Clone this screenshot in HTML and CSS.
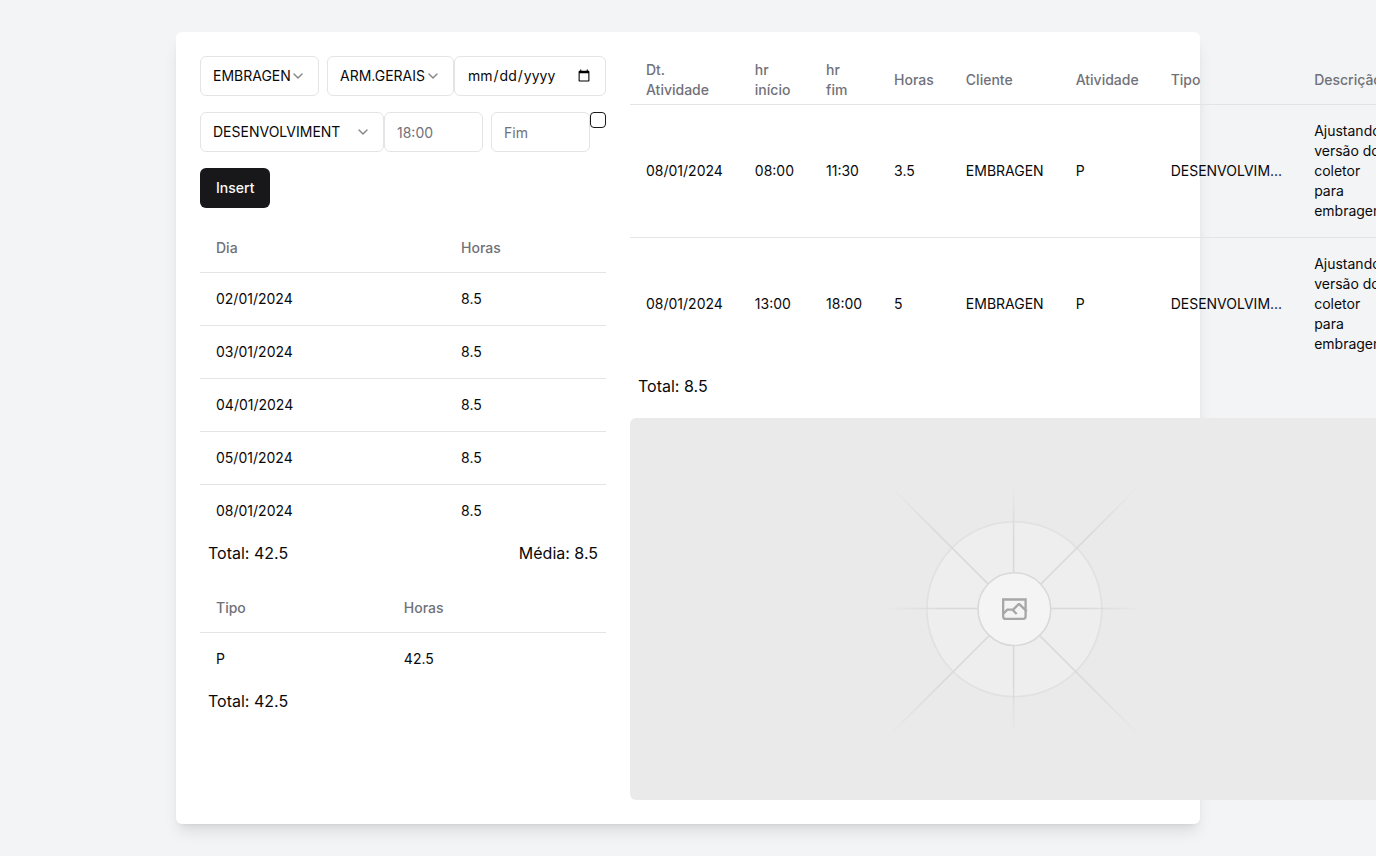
FILE: index.html
```html
<!DOCTYPE html>
<html lang="pt-BR">
<head>
<meta charset="utf-8">
<meta name="viewport" content="width=device-width, initial-scale=1">
<title>Atividades</title>
<link rel="stylesheet" href="styles.css">
</head>
<body>
<main class="card">
  <section class="column">
    <form class="form">
      <div class="form-row">
        <div class="select select-client">
          <select aria-label="Cliente"><option>EMBRAGEN</option></select>
          <svg class="chevron" viewBox="0 0 24 24"><path d="m6 9 6 6 6-6"/></svg>
        </div>
        <div class="joined">
          <div class="select select-project">
            <select aria-label="Projeto"><option>ARM.GERAIS</option></select>
            <svg class="chevron" viewBox="0 0 24 24"><path d="m6 9 6 6 6-6"/></svg>
          </div>
          <input class="input input-date" type="date" lang="en-US" aria-label="Data">
        </div>
      </div>
      <div class="form-row">
        <div class="joined">
          <div class="select select-type">
            <select aria-label="Tipo"><option>DESENVOLVIMENT</option></select>
            <svg class="chevron" viewBox="0 0 24 24"><path d="m6 9 6 6 6-6"/></svg>
          </div>
          <input class="input input-time" type="text" placeholder="18:00" aria-label="Início">
        </div>
        <div class="joined">
          <input class="input input-time" type="text" placeholder="Fim" aria-label="Fim">
          <input class="checkbox" type="checkbox" aria-label="Concluído">
        </div>
      </div>
      <button class="button" type="button">Insert</button>
    </form>

    <div>
      <table class="table">
        <thead><tr><th>Dia</th><th>Horas</th></tr></thead>
        <tbody>
          <tr><td>02/01/2024</td><td>8.5</td></tr>
          <tr><td>03/01/2024</td><td>8.5</td></tr>
          <tr><td>04/01/2024</td><td>8.5</td></tr>
          <tr><td>05/01/2024</td><td>8.5</td></tr>
          <tr><td>08/01/2024</td><td>8.5</td></tr>
        </tbody>
      </table>
      <div class="totals"><span>Total: 42.5</span><span>Média: 8.5</span></div>
    </div>

    <div>
      <table class="table">
        <thead><tr><th>Tipo</th><th>Horas</th></tr></thead>
        <tbody><tr><td>P</td><td>42.5</td></tr></tbody>
      </table>
      <div class="totals"><span>Total: 42.5</span></div>
    </div>
  </section>

  <section class="column">
    <div>
      <table class="table">
        <thead>
          <tr><th>Dt. Atividade</th><th>hr início</th><th>hr fim</th><th>Horas</th><th>Cliente</th><th>Atividade</th><th>Tipo</th><th>Descrição</th></tr>
        </thead>
        <tbody>
          <tr><td>08/01/2024</td><td>08:00</td><td>11:30</td><td>3.5</td><td>EMBRAGEN</td><td>P</td><td>DESENVOLVIM...</td><td>Ajustando versão do coletor para embragen</td></tr>
          <tr><td>08/01/2024</td><td>13:00</td><td>18:00</td><td>5</td><td>EMBRAGEN</td><td>P</td><td>DESENVOLVIM...</td><td>Ajustando versão do coletor para embragen</td></tr>
        </tbody>
      </table>
      <div class="totals"><span>Total: 8.5</span></div>
    </div>
    <div class="picture">
      <svg class="placeholder" viewBox="0 0 1200 1200" preserveAspectRatio="xMidYMid slice" fill="none" role="img" aria-label="Imagem">
        <defs>
          <linearGradient id="fade-up" x1="405.98" y1="796.6" x2="797.4" y2="405.2" gradientUnits="userSpaceOnUse">
            <stop stop-color="#C9C9C9" stop-opacity="0"/><stop offset=".208" stop-color="#C9C9C9"/><stop offset=".792" stop-color="#C9C9C9"/><stop offset="1" stop-color="#C9C9C9" stop-opacity="0"/>
          </linearGradient>
          <linearGradient id="fade-across" x1="796.9" y1="599" x2="404.5" y2="599" gradientUnits="userSpaceOnUse">
            <stop stop-color="#C9C9C9" stop-opacity="0"/><stop offset=".208" stop-color="#C9C9C9"/><stop offset=".792" stop-color="#C9C9C9"/><stop offset="1" stop-color="#C9C9C9" stop-opacity="0"/>
          </linearGradient>
          <linearGradient id="fade-vertical" x1="600" y1="403.7" x2="600" y2="796.1" gradientUnits="userSpaceOnUse">
            <stop stop-color="#C9C9C9" stop-opacity="0"/><stop offset=".208" stop-color="#C9C9C9"/><stop offset=".792" stop-color="#C9C9C9"/><stop offset="1" stop-color="#C9C9C9" stop-opacity="0"/>
          </linearGradient>
          <linearGradient id="fade-down" x1="403.9" y1="404.8" x2="796" y2="796.9" gradientUnits="userSpaceOnUse">
            <stop stop-color="#C9C9C9" stop-opacity="0"/><stop offset=".208" stop-color="#C9C9C9"/><stop offset=".792" stop-color="#C9C9C9"/><stop offset="1" stop-color="#C9C9C9" stop-opacity="0"/>
          </linearGradient>
        </defs>
        <rect width="1200" height="1200" fill="#EAEAEA"/>
        <g opacity=".5">
          <circle cx="600.709" cy="599.88" r="136.62" fill="#FAFAFA" stroke="#C9C9C9" stroke-width="2.418" opacity=".5"/>
          <g stroke-width="2.418">
            <path stroke="url(#fade-up)" d="M405.98 796.6 797.4 405.2"/>
            <path stroke="url(#fade-across)" d="M404.846 598.671h391.726"/>
            <path stroke="url(#fade-vertical)" d="M599.5 795.742V404.017"/>
            <path stroke="url(#fade-down)" d="m795.717 796.597-391.441-391.44"/>
          </g>
          <circle cx="600.709" cy="599.88" r="56.825" fill="#fff" stroke="#C9C9C9" stroke-width="2.418"/>
          <path fill="#666" fill-rule="evenodd" d="M616.426 586.58h-31.434v16.176l3.553-3.554.531-.531h9.068l.074-.074 8.463-8.463h2.565l7.18 7.181V586.58Zm-15.715 14.654 3.698 3.699 1.283 1.282-2.565 2.565-1.282-1.283-5.2-5.199h-6.066l-5.514 5.514-.073.073v2.876a2.418 2.418 0 0 0 2.418 2.418h26.598a2.418 2.418 0 0 0 2.418-2.418v-8.317l-8.463-8.463-7.181 7.181-.071.072Zm-19.347 5.442v4.085a6.045 6.045 0 0 0 6.046 6.045h26.598a6.044 6.044 0 0 0 6.045-6.045v-7.108l1.356-1.355-1.282-1.283-.074-.073v-17.989h-38.689v23.43l-.146.146.146.147Z"/>
        </g>
      </svg>
    </div>
  </section>
</main>
</body>
</html>
```

FILE: styles.css
```css
*,
*::before,
*::after {
  box-sizing: border-box;
}

body {
  margin: 0;
  padding: 32px;
  min-height: 100vh;
  display: flex;
  justify-content: center;
  overflow: hidden;
  background: #f3f4f6;
  color: #09090b;
  font-family: Inter, "Liberation Sans", sans-serif;
  font-size: 16px;
  line-height: 24px;
}

.card {
  width: 100%;
  max-width: 1024px;
  padding: 24px;
  display: grid;
  grid-template-columns: 1fr 1fr;
  gap: 24px;
  background: #fff;
  border-radius: 6px;
  box-shadow: 0 10px 15px -3px rgb(0 0 0 / 0.1), 0 4px 6px -4px rgb(0 0 0 / 0.1);
}

.column {
  display: flex;
  flex-direction: column;
  gap: 16px;
}

.form {
  display: flex;
  flex-direction: column;
  align-items: flex-start;
  gap: 16px;
}

.form-row {
  display: flex;
  gap: 8px;
}

.joined {
  display: flex;
  align-items: flex-start;
}

.select {
  position: relative;
}

.select select {
  appearance: none;
  width: 100%;
  height: 40px;
  padding: 0 0 1px 12px;
  border: 1px solid #e4e4e7;
  border-radius: 6px;
  background: #fff;
  color: inherit;
  font: inherit;
  font-size: 14px;
  line-height: 20px;
}

.select-client {
  width: 119px;
}

.select-project {
  width: 127px;
}

.select-type {
  width: 184px;
}

.chevron {
  position: absolute;
  top: 12px;
  right: 13px;
  width: 16px;
  height: 16px;
  fill: none;
  stroke: currentColor;
  stroke-width: 2;
  stroke-linecap: round;
  stroke-linejoin: round;
  opacity: 0.5;
  pointer-events: none;
}

.input {
  height: 40px;
  margin: 0;
  padding: 8px 12px;
  border: 1px solid #e4e4e7;
  border-radius: 6px;
  background: #fff;
  color: inherit;
  font: inherit;
  font-size: 14px;
  line-height: 20px;
}

.input::placeholder {
  color: #71717a;
}

.input-date {
  width: 152px;
}

.input-time {
  width: 99px;
}

.checkbox {
  appearance: none;
  width: 16px;
  height: 16px;
  margin: 0;
  border: 1px solid #18181b;
  border-radius: 4px;
  background: #fff;
}

.checkbox:checked {
  background: #18181b;
}

.button {
  height: 40px;
  padding: 8px 16px;
  border: 0;
  border-radius: 6px;
  background: #18181b;
  color: #fafafa;
  font: inherit;
  font-size: 14px;
  font-weight: 500;
  line-height: 20px;
}

.table {
  width: 100%;
  border-collapse: collapse;
  font-size: 14px;
  line-height: 20px;
}

.table th {
  height: 48px;
  padding: 0 16px;
  color: #71717a;
  font-weight: 500;
  text-align: left;
  vertical-align: middle;
}

.table td {
  padding: 16px;
  vertical-align: middle;
}

.table tr {
  border-bottom: 1px solid #e4e4e7;
}

.table tbody tr:last-child {
  border-bottom: 0;
}

.totals {
  display: flex;
  justify-content: space-between;
  padding: 4px 8px;
}

.picture {
  flex: 1 1 0;
  min-height: 0;
  display: grid;
  overflow: hidden;
  border-radius: 6px;
}

.placeholder {
  width: 100%;
  height: 100%;
  min-height: 0;
}
```
